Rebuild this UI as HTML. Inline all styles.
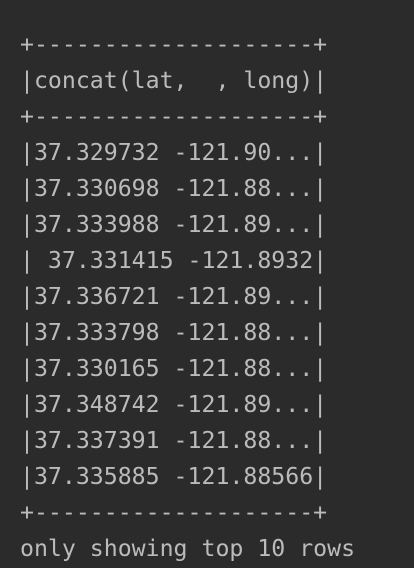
<!DOCTYPE html>
<html><head><style>
html,body{margin:0;padding:0;background:#2b2b2b;width:414px;height:568px;overflow:hidden}
pre{margin:0;position:absolute;left:20px;top:27px;font-family:"DejaVu Sans Mono","Liberation Mono",monospace;font-size:23.2px;line-height:36px;color:#bbbbbb}
</style></head><body>
<pre>+--------------------+
|concat(lat,  , long)|
+--------------------+
|37.329732 -121.90...|
|37.330698 -121.88...|
|37.333988 -121.89...|
| 37.331415 -121.8932|
|37.336721 -121.89...|
|37.333798 -121.88...|
|37.330165 -121.88...|
|37.348742 -121.89...|
|37.337391 -121.88...|
|37.335885 -121.88566|
+--------------------+
only showing top 10 rows</pre>
</body></html>
